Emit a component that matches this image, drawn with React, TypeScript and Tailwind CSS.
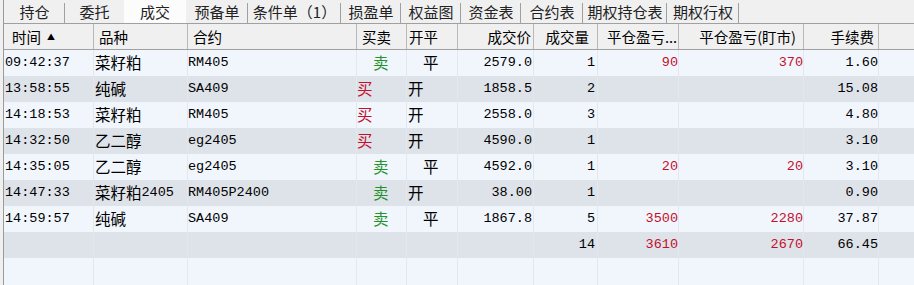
import React from "react";

type Trade = {
  time: string;
  name: string;
  code: string;
  side: "买" | "卖";
  offset: "开" | "平";
  price: string;
  vol: string;
  pnl?: string;
  pnlMark?: string;
  fee: string;
};

const trades: Trade[] = [
  { time: "09:42:37", name: "菜籽粕", code: "RM405", side: "卖", offset: "平", price: "2579.0", vol: "1", pnl: "90", pnlMark: "370", fee: "1.60" },
  { time: "13:58:55", name: "纯碱", code: "SA409", side: "买", offset: "开", price: "1858.5", vol: "2", fee: "15.08" },
  { time: "14:18:53", name: "菜籽粕", code: "RM405", side: "买", offset: "开", price: "2558.0", vol: "3", fee: "4.80" },
  { time: "14:32:50", name: "乙二醇", code: "eg2405", side: "买", offset: "开", price: "4590.0", vol: "1", fee: "3.10" },
  { time: "14:35:05", name: "乙二醇", code: "eg2405", side: "卖", offset: "平", price: "4592.0", vol: "1", pnl: "20", pnlMark: "20", fee: "3.10" },
  { time: "14:47:33", name: "菜籽粕2405", code: "RM405P2400", side: "卖", offset: "开", price: "38.00", vol: "1", fee: "0.90" },
  { time: "14:59:57", name: "纯碱", code: "SA409", side: "卖", offset: "平", price: "1867.8", vol: "5", pnl: "3500", pnlMark: "2280", fee: "37.87" },
];

const tabs: { label: string; w: string; active?: boolean }[] = [
  { label: "持仓", w: "w-[61px]" },
  { label: "委托", w: "w-[59px]" },
  { label: "成交", w: "w-[62px]", active: true },
  { label: "预备单", w: "w-[62px]" },
  { label: "条件单（1）", w: "w-[93px]" },
  { label: "损盈单", w: "w-[60px]" },
  { label: "权益图", w: "w-[60px]" },
  { label: "资金表", w: "w-[60px]" },
  { label: "合约表", w: "w-[62px]" },
  { label: "期权持仓表", w: "w-[84px]" },
  { label: "期权行权", w: "w-[72px]" },
];

const GRID =
  "grid grid-cols-[90px_94px_169px_50px_51px_76px_64px_81px_125px_75px_1fr]";

const cjk = "font-['Noto_Sans_CJK_SC',sans-serif] text-[15.5px]";
const mono = "font-['Liberation_Mono','Noto_Sans_CJK_SC',monospace] text-[13.5px]";

// Renders mixed text: Han runs in the sans face, the rest in the mono face.
function Mixed({ text }: { text: string }) {
  const parts = text.split(/([\u4e00-\u9fff]+)/).filter(Boolean);
  return (
    <>
      {parts.map((p, i) =>
        /[\u4e00-\u9fff]/.test(p) ? (
          <span key={i} className={cjk}>
            {p}
          </span>
        ) : (
          <span key={i}>{p}</span>
        )
      )}
    </>
  );
}

const bodyCell = "flex items-center border-r border-[#e3e8ef] whitespace-nowrap overflow-hidden";
const headCell = "flex items-center border-r border-[#b8b8b8] whitespace-nowrap overflow-hidden";

function Row({ t, dark, total }: { t?: Trade; dark: boolean; total?: { vol: string; pnl: string; pnlMark: string; fee: string } }) {
  const bg = dark ? "bg-[#dee2e9]" : "bg-[#f1f6fd]";
  const red = "text-[#c3102c]";
  const green = "text-[#23922a]";
  return (
    <div className={`${GRID} h-[26px] ${bg} ${mono} text-black`}>
      <div className={`${bodyCell} pl-[1px]`}>{t?.time}</div>
      <div className={`${bodyCell} pl-[1px]`}>{t && <Mixed text={t.name} />}</div>
      <div className={`${bodyCell} pl-0`}>{t?.code}</div>
      <div className={`${bodyCell}`}>
        {t && (
          <span className={`${cjk} ${t.side === "买" ? `${red} pl-0` : `${green} pl-[16px]`}`}>{t.side}</span>
        )}
      </div>
      <div className={`${bodyCell}`}>
        {t && <span className={`${cjk} ${t.offset === "开" ? "pl-[1px]" : "pl-[16px]"}`}>{t.offset}</span>}
      </div>
      <div className={`${bodyCell} justify-end pr-[1px]`}>{t?.price}</div>
      <div className={`${bodyCell} justify-end pr-[2px]`}>{t ? t.vol : total?.vol}</div>
      <div className={`${bodyCell} justify-end pr-0 ${red}`}>{t ? t.pnl : total?.pnl}</div>
      <div className={`${bodyCell} justify-end pr-0 ${red}`}>{t ? t.pnlMark : total?.pnlMark}</div>
      <div className={`${bodyCell} justify-end pr-0`}>{t ? t.fee : total?.fee}</div>
      <div />
    </div>
  );
}

export default function App() {
  return (
    <div className="w-[914px] h-[285px] overflow-hidden bg-[#f0f0f0] pl-[3px]">
      <div className="h-full border-l border-[#9a9a9a] flex flex-col">
        {/* tab strip */}
        <div className="h-[24px] flex border-b border-[#a0a0a0] font-['Noto_Sans_CJK_SC',sans-serif] text-[15px] text-[#222]">
          {tabs.map((tab, i) => (
            <div
              key={tab.label}
              className={`${tab.w} h-[23px] flex items-center justify-center relative ${
                tab.active ? "bg-[#fcfcfc]" : ""
              }`}
            >
              <span className="leading-none">{tab.label}</span>
              {!tab.active && !tabs[i + 1]?.active && (
                <span className="absolute right-0 top-[3px] bottom-0 w-px bg-[#a0a0a0]" />
              )}
            </div>
          ))}
        </div>

        {/* column headers */}
        <div
          className={`${GRID} h-[26px] border-b border-[#a0a0a0] bg-[#f0f0f0] font-['Noto_Sans_CJK_SC',sans-serif] text-[14.5px] text-black`}
        >
          <div className={`${headCell} pl-[8px]`}>
            时间
            <span className="ml-[6px] text-[8px] leading-none">▲</span>
          </div>
          <div className={`${headCell} pl-[5px]`}>品种</div>
          <div className={`${headCell} pl-[5px]`}>合约</div>
          <div className={`${headCell} pl-[5px]`}>买卖</div>
          <div className={`${headCell} pl-[2px]`}>开平</div>
          <div className={`${headCell} justify-end pr-[2px]`}>成交价</div>
          <div className={`${headCell} justify-end pr-[8px]`}>成交量</div>
          <div className={`${headCell} justify-end pr-[1px]`}>平仓盈亏...</div>
          <div className={`${headCell} justify-end pr-[7px]`}>平仓盈亏(盯市)</div>
          <div className={`${headCell} justify-end pr-[4px]`}>手续费</div>
          <div />
        </div>

        {/* trade rows */}
        {trades.map((t, i) => (
          <Row key={i} t={t} dark={i % 2 === 1} />
        ))}
        <Row dark total={{ vol: "14", pnl: "3610", pnlMark: "2670", fee: "66.45" }} />

        {/* empty area below the table */}
        <div className={`${GRID} flex-1 bg-[#f1f6fd]`}>
          {Array.from({ length: 10 }).map((_, i) => (
            <div key={i} className="border-r border-[#e3e8ef]" />
          ))}
          <div />
        </div>
      </div>
    </div>
  );
}
